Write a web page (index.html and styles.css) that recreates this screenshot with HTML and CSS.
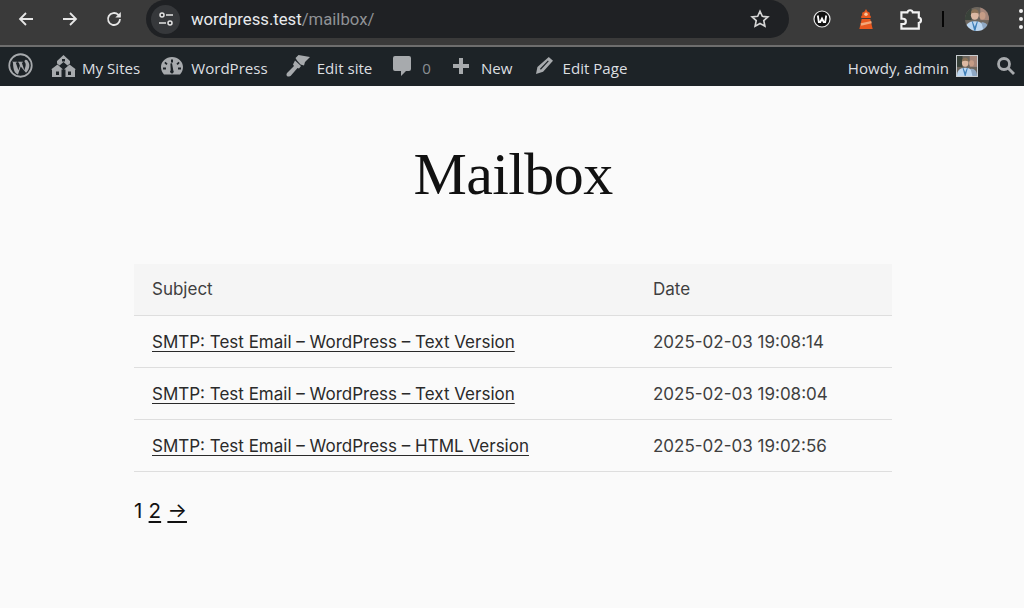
FILE: index.html
```html
<!DOCTYPE html>
<html lang="en">
<head>
<meta charset="utf-8">
<title>Mailbox</title>
<link rel="stylesheet" href="styles.css">
</head>
<body>
<svg class="defs" width="0" height="0" aria-hidden="true">
  <symbol id="photo" viewBox="0 0 22 22">
    <rect width="22" height="22" fill="#6d665e"/>
    <rect x="0" width="6" height="12" fill="#39423a"/>
    <rect x="14" width="8" height="12" fill="#a5867a"/>
    <ellipse cx="9" cy="7.500" rx="3.600" ry="4.300" fill="#dcb9a3"/>
    <path d="M5.500 6c0-3 1.500-4 3.500-4s3.500 1 3.500 4c-2-1-5-1-7 0z" fill="#8c7358"/>
    <ellipse cx="16" cy="8" rx="2.800" ry="3.400" fill="#c59c86"/>
    <path d="M0 22c0-6 3-9 9-9s9 3 9 9z" fill="#bcd6f0"/>
    <path d="M15 14c4 0 7 2 7 8h-5z" fill="#8fa8c4"/>
    <path d="M7 13l2 5 2-5 .8.400L9.500 22h-1L6.200 13.400z" fill="#3f7fb8"/>
  </symbol>
</svg>
<header class="chrome">
  <svg class="nav back" viewBox="0 0 18 18"><path d="M16 9H3M9 3L3 9l6 6"/></svg>
  <svg class="nav fwd" viewBox="0 0 18 18"><path d="M2 9h13M9 3l6 6-6 6"/></svg>
  <svg class="nav reload" viewBox="0 0 18 18"><path d="M15 9a6 6 0 1 1-1.800-4.300L15 6.500"/><path class="fill" d="M15.800 2v5.500h-5.500z"/></svg>
  <div class="omnibox">
    <span class="tune"><svg viewBox="0 0 18 18"><circle cx="5" cy="5" r="2"/><path d="M9 5h7M2 13h7"/><circle cx="13" cy="13" r="2"/></svg></span>
    <span class="url">wordpress.test<span class="path">/mailbox/</span></span>
    <svg class="star" viewBox="0 0 18 18"><path d="M9 2l2.100 4.600 5 .5-3.700 3.400 1 4.900L9 13l-4.400 2.400 1-4.900L1.900 7.100l5-.5z"/></svg>
  </div>
  <div class="exts">
    <svg class="ext-w" viewBox="0 0 18 18"><circle class="w-ring" cx="9" cy="9" r="8"/><path d="M4.800 5.500l1 6.500h1.500L9 8.500l1.700 3.500h1.500l1-6.500"/></svg>
    <svg class="ext-light" viewBox="0 0 16 22"><path d="M8 0l1.500 2.500L12 4v3h1v2.500H3V7h1V4l2.500-1.500z"/><circle class="lamp" cx="8" cy="5.500" r="1.800"/><path d="M3.500 10.500h9L15 21H1z"/><path class="band" d="M2.500 15l11-2.500.5 2.500-11 2.500z"/></svg>
    <svg class="ext-puzzle" viewBox="0 0 20 20"><path d="M2 4.500h5a2.300 2.300 0 0 1 4.500 0H16.500v4.300a2.300 2.300 0 0 1 0 4.500V18H2v-3.800h1.500a2 2 0 0 0 0-4.400H2z"/></svg>
    <span class="divider"></span>
    <svg class="profile" viewBox="0 0 22 22"><use href="#photo"/></svg>
    <span class="dots"><i></i><i></i><i></i></span>
  </div>
</header>
<nav class="adminbar">
  <svg class="ab-wp" viewBox="0 0 24 24"><circle cx="12" cy="12" r="10.800"/><path class="wp-w" d="M3.800 8.300h4.800v.7l-1.200.2 2.600 7.300 1.400-4.300-1-3-1-.2v-.7h5v.7l-1.200.2 2.500 7.300 1-3.300c.6-2 .2-3.300-.5-4.300-.5-.7-.6-1.800.4-2.200.8-.3 1.400 0 1.800.3 1.300 1.500 2.100 3.300 2.100 5 0 2.800-1.300 5.300-3.200 7L12.200 13l-2.600 7.700C6.800 19.500 5 17.500 4.800 9.200z"/></svg>
  <span class="ab-item sites"><svg class="ab-ico" viewBox="0 0 25 22"><path fill-rule="evenodd" d="M12.500 0L19 6v2.500l-2.500 2-4-3.500-4 3.500L6 8.500V6zM11 4v2.500h3V4z"/><path fill-rule="evenodd" d="M6.500 9.500L12 14.500h-1.500V22H1v-7.500H0zM5 16.500V20h3v-3.500z"/><path fill-rule="evenodd" d="M18.500 9.500L25 14.500h-1V22h-9.500v-7.500H13zM17 16.500V20h3v-3.500z"/></svg><span>My Sites</span></span>
  <span class="ab-item wp"><svg class="ab-ico" viewBox="0 0 22 18"><path fill-rule="evenodd" d="M11 0c6 0 11 4.500 11 10 0 2.700-1 5.500-3 7.500H3C1 15.500 0 12.700 0 10 0 4.500 5 0 11 0zm-1 2.500v3h2v-3zM4.500 4.700L3.300 6l2 2 1.300-1.300zm13 0l-2.100 2L16.700 8l2-2zM2 10.500v2h3v-2zm15 0v2h3v-2zM9.400 6.500l.3 6.800a1.800 1.800 0 1 0 2.600.2L11 6.300z"/></svg><span>WordPress</span></span>
  <span class="ab-item edit"><svg class="ab-ico" viewBox="0 0 24 22"><path d="M12.500 0L24 2l-5 5-1 3.500-3.500-1-3.500-4L9.500 3z"/><path d="M9 5.500l6 5.500-2 2.500-1.500-.5-6.500 7.500c-1 1-3 1.500-4 .5s-.5-2.500.5-3.500L8 11l-1-1.500z"/></svg><span>Edit site</span></span>
  <span class="ab-item comments"><svg class="ab-ico" viewBox="0 0 18 20"><path d="M2 0h14a2 2 0 0 1 2 2v11a2 2 0 0 1-2 2h-3l-5 5v-5H2a2 2 0 0 1-2-2V2a2 2 0 0 1 2-2z"/></svg><span class="count">0</span></span>
  <span class="ab-item new"><svg class="ab-ico" viewBox="0 0 18 18"><path d="M7 1h4v6h6v4h-6v6H7v-6H1V7h6z"/></svg><span>New</span></span>
  <span class="ab-item page"><svg class="ab-ico" viewBox="0 0 18 18"><path fill-rule="evenodd" d="M13.500 0L18 4 7.500 15.500 0 18l1.500-7.500zM4.200 12.500l.9.900 8.400-8.800-.9-.9z"/></svg><span>Edit Page</span></span>
  <span class="ab-right"><span>Howdy, admin</span><svg class="avatar" viewBox="0 0 22 22"><use href="#photo"/></svg><svg class="ab-search" viewBox="0 0 20 20"><circle cx="8" cy="8" r="5.500"/><path d="M12 12l6 6"/></svg></span>
</nav>
<main class="content">
  <h1 class="title">Mailbox</h1>
  <table class="mail">
    <thead><tr><th class="col-subject">Subject</th><th>Date</th></tr></thead>
    <tbody>
      <tr><td><a href="#">SMTP: Test Email – WordPress – Text Version</a></td><td>2025-02-03 19:08:14</td></tr>
      <tr><td><a href="#">SMTP: Test Email – WordPress – Text Version</a></td><td>2025-02-03 19:08:04</td></tr>
      <tr><td><a href="#">SMTP: Test Email – WordPress – HTML Version</a></td><td>2025-02-03 19:02:56</td></tr>
    </tbody>
  </table>
  <p class="pager">1 <a href="#">2</a> <a href="#">→</a></p>
</main>
</body>
</html>
```
FILE: styles.css
```css
* { box-sizing: border-box; }
html, body { margin: 0; height: 100%; }
body { background: #fafafa; overflow: hidden; font-family: "Inter", sans-serif; }
.defs { display: block; height: 0; }

.chrome { height: 47px; background: #3a3a3a; border-bottom: 2px solid #6e6e6e; display: flex; align-items: center; padding-bottom: 7px; }
.nav { width: 18px; height: 18px; fill: none; stroke: #e6e6e6; stroke-width: 1.800; flex: none; }
.nav .fill { fill: #e6e6e6; stroke: none; }
.back { margin-left: 17px; }
.fwd { margin-left: 26px; }
.reload { margin-left: 26px; }
.omnibox { width: 643px; height: 38px; margin-left: 23px; background: #1f2124; border-radius: 19px; display: flex; align-items: center; padding: 0 19px 0 5px; }
.tune { width: 29px; height: 29px; border-radius: 50%; background: #36383b; display: flex; align-items: center; justify-content: center; flex: none; }
.tune svg { width: 18px; height: 18px; fill: none; stroke: #e3e3e3; stroke-width: 1.500; }
.url { margin-left: 11px; font-family: "Roboto", sans-serif; font-size: 16.700px; color: #e8eaed; flex: 1; }
.path { color: #8f9296; }
.star { width: 20px; height: 20px; fill: none; stroke: #d6d6d6; stroke-width: 1.500; flex: none; }
.exts { display: flex; align-items: center; flex: 1; padding-left: 24px; }
.ext-w { width: 18px; height: 18px; fill: none; stroke: #fff; stroke-width: 1.800; flex: none; }
.ext-w .w-ring { fill: #111; stroke-width: 1.200; stroke: #e8e8e8; }
.ext-light { width: 16px; height: 21px; margin-left: 27px; fill: #e8581f; flex: none; }
.ext-light .band { fill: #f4a678; }
.ext-light .lamp { fill: #f7c49c; }
.ext-puzzle { width: 24px; height: 24px; margin-left: 25px; fill: none; stroke: #f2f2f2; stroke-width: 1.800; flex: none; }
.divider { width: 2px; height: 16px; background: #050505; margin-left: 19px; flex: none; }
.profile { width: 24px; height: 24px; margin-left: 21px; border-radius: 50%; flex: none; }
.dots { display: flex; flex-direction: column; gap: 4px; margin-left: 30px; flex: none; }
.dots i { display: block; width: 4px; height: 4px; border-radius: 50%; background: #f0f0f0; }

.adminbar { height: 39px; background: #1d2327; display: flex; align-items: center; font-family: "Open Sans", sans-serif; font-size: 15.100px; color: #dcdfe1; padding-top: 2px; }
.ab-wp { width: 25px; height: 25px; margin-left: 8px; margin-top: -4px; fill: none; flex: none; }
.ab-wp circle { stroke: #a7aaad; stroke-width: 1.700; fill: #1d2327; }
.ab-wp .wp-w { fill: #a7aaad; }
.ab-item { display: flex; align-items: center; flex: none; }
.ab-ico { fill: #a7aaad; flex: none; margin-top: -4px; }
.sites { margin-left: 18px; }
.sites .ab-ico { width: 25px; height: 22px; margin-right: 6px; }
.wp { margin-left: 21px; }
.wp .ab-ico { width: 22px; height: 18px; margin-right: 8px; }
.edit { margin-left: 18px; }
.edit .ab-ico { width: 24px; height: 22px; margin-right: 7px; }
.comments { margin-left: 21px; }
.comments .ab-ico { width: 18px; height: 20px; margin-right: 11px; }
.count { color: #8a8f93; }
.new { margin-left: 21px; }
.new .ab-ico { width: 18px; height: 18px; margin-right: 11px; }
.page { margin-left: 23px; }
.page .ab-ico { width: 17px; height: 17px; margin-right: 10px; }
.ab-right { margin-left: auto; display: flex; align-items: center; padding-right: 8px; }
.avatar { width: 22px; height: 22px; margin-left: 7px; margin-top: -4px; border: 1px solid #c8ccd0; flex: none; }
.ab-search { width: 20px; height: 20px; margin-left: 18px; margin-top: -4px; fill: none; stroke: #a7aaad; stroke-width: 2.800; flex: none; }

.content { width: 758px; margin-left: 134px; }
.title { margin: 49px 0 51px; text-align: center; font-family: "Liberation Serif", serif; font-weight: 400; font-size: 60px; line-height: 78px; color: #111; letter-spacing: -0.600px; }
.mail { width: 100%; border-collapse: collapse; font-size: 17px; color: #3f3f3f; }
.mail th { background: #f5f5f5; font-weight: 400; text-align: left; height: 51px; padding: 0 18px; border-bottom: 1px solid #dedede; }
.mail td { height: 52px; padding: 2px 18px 0; border-bottom: 1px solid #dedede; }
.col-subject { width: 501px; }
.mail a { color: #2a2a2a; text-decoration: underline; text-underline-offset: 3px; }
.pager { margin: 26px 0 0; font-size: 20.500px; line-height: 26px; color: #111; word-spacing: 0.500px; }
.pager a { color: #111; text-decoration: underline; text-underline-offset: 3px; }
```
